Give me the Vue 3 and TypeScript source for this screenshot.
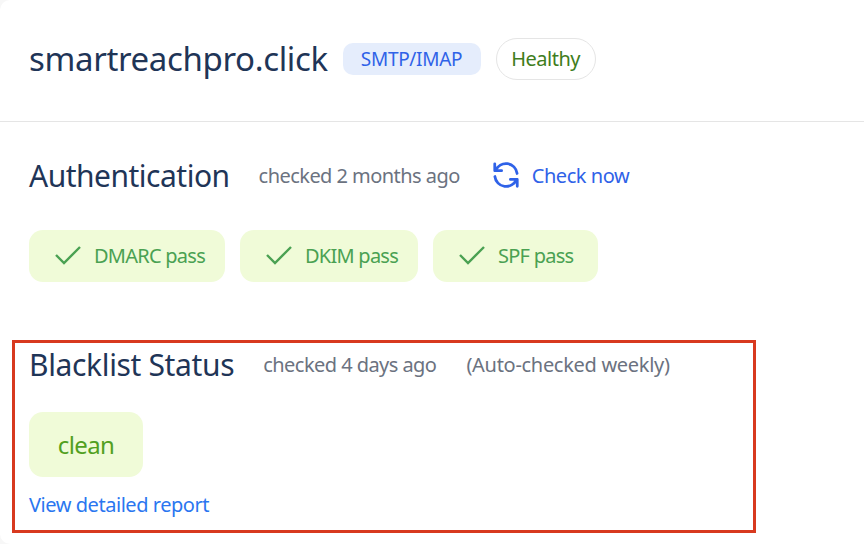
<script setup lang="ts">
const passes: { label: string; width: number }[] = [
  { label: 'DMARC pass', width: 196 },
  { label: 'DKIM pass', width: 178 },
  { label: 'SPF pass', width: 165 },
]
</script>

<template>
  <main class="card">
    <header class="head">
      <h1 class="domain">smartreachpro.click</h1>
      <span class="type">SMTP/IMAP</span>
      <span class="health">Healthy</span>
    </header>
    <section class="auth">
      <div class="row">
        <h2 class="title">Authentication</h2>
        <span class="muted">checked 2 months ago</span>
        <a class="check">
          <svg width="30" height="30" viewBox="0 0 24 24" fill="none" stroke="#2f62e8" stroke-width="2.2" stroke-linecap="round" stroke-linejoin="round">
            <path d="M3 3v5.5h5.5" />
            <path d="M3.6 8.5A9 9 0 0 1 20.9 10.8" />
            <path d="M21 21v-5.5h-5.5" />
            <path d="M20.4 15.5A9 9 0 0 1 3.1 13.2" />
          </svg>
          <span>Check now</span>
        </a>
      </div>
      <div class="passes">
        <span v-for="p in passes" :key="p.label" class="pass" :style="{ width: p.width + 'px' }">
          <svg width="26" height="20" viewBox="0 0 26 20" fill="none" stroke="#4aa152" stroke-width="2.4">
            <path d="M1 10l8 8L25 2" />
          </svg>
          <span>{{ p.label }}</span>
        </span>
      </div>
    </section>
    <section class="black">
      <div class="row">
        <h2 class="title wide">Blacklist Status</h2>
        <span class="muted">checked 4 days ago</span>
        <span class="muted auto">(Auto-checked weekly)</span>
      </div>
      <span class="clean">clean</span>
      <a class="report">View detailed report</a>
    </section>
  </main>
</template>

<style>
html, body { margin: 0; background: #f7f7f7; }
</style>

<style scoped>
.card {
  width: 864px;
  height: 544px;
  overflow: hidden;
  box-sizing: border-box;
  background: #fff;
  border-radius: 10px 0 0 10px;
  font-family: "Noto Sans", "Open Sans", sans-serif;
  color: #1f3557;
}
.head {
  display: flex;
  align-items: center;
  height: 122px;
  box-sizing: border-box;
  padding: 0 0 4px 29px;
  border-bottom: 1px solid #e5e5e5;
}
.domain { margin: 0; font-size: 33px; font-weight: 400; letter-spacing: -0.35px; }
.type {
  margin-left: 15px;
  padding: 0 19px 0 18px;
  line-height: 32px;
  border-radius: 10px;
  background: #e5edfc;
  color: #2f62e8;
  font-size: 19px;
  letter-spacing: -0.3px;
}
.health {
  margin-left: 15px;
  padding: 0 15px 0 14px;
  line-height: 40px;
  border: 1px solid #e5e5e5;
  border-radius: 21px;
  color: #3f7d20;
  font-size: 20px;
  letter-spacing: -0.5px;
}
.auth { padding: 32px 0 0 29px; }
.row { display: flex; align-items: center; height: 44px; padding-bottom: 2px; box-sizing: border-box; }
.title { margin: 0; font-size: 30px; font-weight: 400; letter-spacing: -0.5px; }
.title.wide { letter-spacing: -0.35px; }
.muted { margin-left: 29px; font-size: 20px; color: #6b7280; letter-spacing: -0.55px; }
.auto { margin-left: 30px; letter-spacing: -0.3px; }
.check {
  display: flex;
  align-items: center;
  gap: 11px;
  margin-left: 31px;
  color: #2f62e8;
  font-size: 20px;
  letter-spacing: -0.45px;
}
.passes { display: flex; gap: 15px; margin-top: 32px; }
.pass {
  display: flex;
  align-items: center;
  gap: 13px;
  height: 52px;
  padding: 0 0 2px 26px;
  box-sizing: border-box;
  border-radius: 14px;
  background: #f0fbd8;
  color: #4aa152;
  font-size: 20px;
  letter-spacing: -0.75px;
}
.black {
  width: 744px;
  height: 193px;
  box-sizing: border-box;
  margin: 58px 0 0 12px;
  padding: 0 0 0 14px;
  border: 3px solid #d8391f;
}
.clean {
  display: flex;
  align-items: center;
  justify-content: center;
  width: 114px;
  height: 65px;
  margin-top: 25px;
  border-radius: 14px;
  background: #f0fbd8;
  color: #52a01f;
  font-size: 24px;
  letter-spacing: -0.6px;
}
.report {
  display: block;
  margin-top: 14px;
  color: #2a76f0;
  font-size: 20px;
  letter-spacing: -0.45px;
}
</style>
